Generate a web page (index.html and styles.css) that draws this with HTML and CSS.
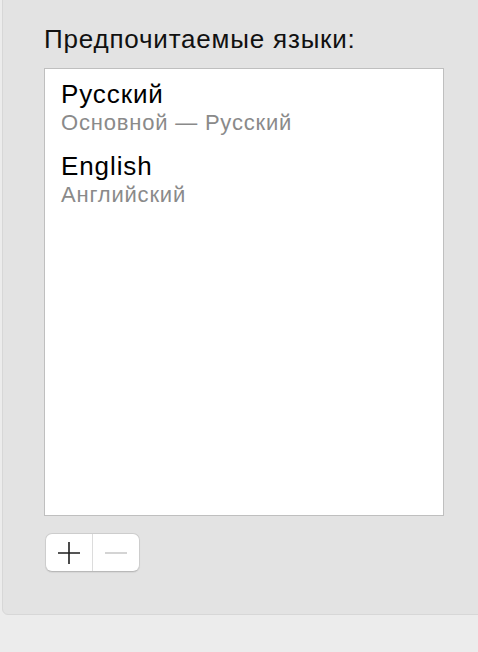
FILE: index.html
```html
<!DOCTYPE html>
<html lang="ru">
<head>
<meta charset="utf-8">
<title>Языки</title>
<link rel="stylesheet" href="styles.css">
</head>
<body>
<div class="panel">
  <div class="heading">Предпочитаемые языки:</div>
  <div class="list">
    <div class="item">
      <div class="name">Русский</div>
      <div class="sub">Основной — Русский</div>
    </div>
    <div class="item">
      <div class="name">English</div>
      <div class="sub">Английский</div>
    </div>
  </div>
  <div class="seg">
    <div class="seg-btn">
      <svg width="24" height="24" viewBox="0 0 24 24"><path d="M1 12H23M12 1V23" stroke="#1e1e1e" stroke-width="1.6" fill="none"/></svg>
    </div>
    <div class="seg-btn">
      <svg width="24" height="24" viewBox="0 0 24 24"><path d="M1 12H23" stroke="#c9c9c9" stroke-width="1.6" fill="none"/></svg>
    </div>
  </div>
</div>
</body>
</html>
```

FILE: styles.css
```css
html, body {
  margin: 0;
  padding: 0;
}
body {
  background: #ececec;
  font-family: "Liberation Sans", Arial, sans-serif;
  width: 478px;
  height: 652px;
  overflow: hidden;
}
.panel {
  margin-left: 2px;
  margin-top: -2px;
  width: 490px;
  height: 617px;
  box-sizing: border-box;
  background: #e3e3e3;
  border: 1px solid #d7d7d7;
  border-bottom-left-radius: 6px;
  padding: 25px 0 0 41px;
}
.heading {
  font-size: 26px;
  line-height: 30px;
  letter-spacing: 0.8px;
  color: #111;
  margin-bottom: 14px;
}
.list {
  width: 400px;
  height: 448px;
  box-sizing: border-box;
  background: #fff;
  border: 1px solid #bfbfbf;
  padding: 10px 0 0 16px;
}
.item {
  margin-bottom: 14px;
}
.name {
  font-size: 26px;
  line-height: 30px;
  letter-spacing: 0.9px;
  color: #000;
}
.sub {
  font-size: 22px;
  line-height: 28px;
  letter-spacing: 0.8px;
  color: #8a8a8a;
}
.seg {
  margin-top: 17px;
  margin-left: 1px;
  display: flex;
  width: 95px;
  height: 39px;
  box-sizing: border-box;
  background: #fff;
  border: 1px solid #cdcdcd;
  border-bottom-color: #b9b9b9;
  border-radius: 7px;
  box-shadow: 0 1px 1px rgba(0, 0, 0, 0.06);
}
.seg-btn {
  flex: 1;
  display: flex;
  align-items: center;
  justify-content: center;
}
.seg-btn + .seg-btn {
  border-left: 1px solid #dcdcdc;
}
```
